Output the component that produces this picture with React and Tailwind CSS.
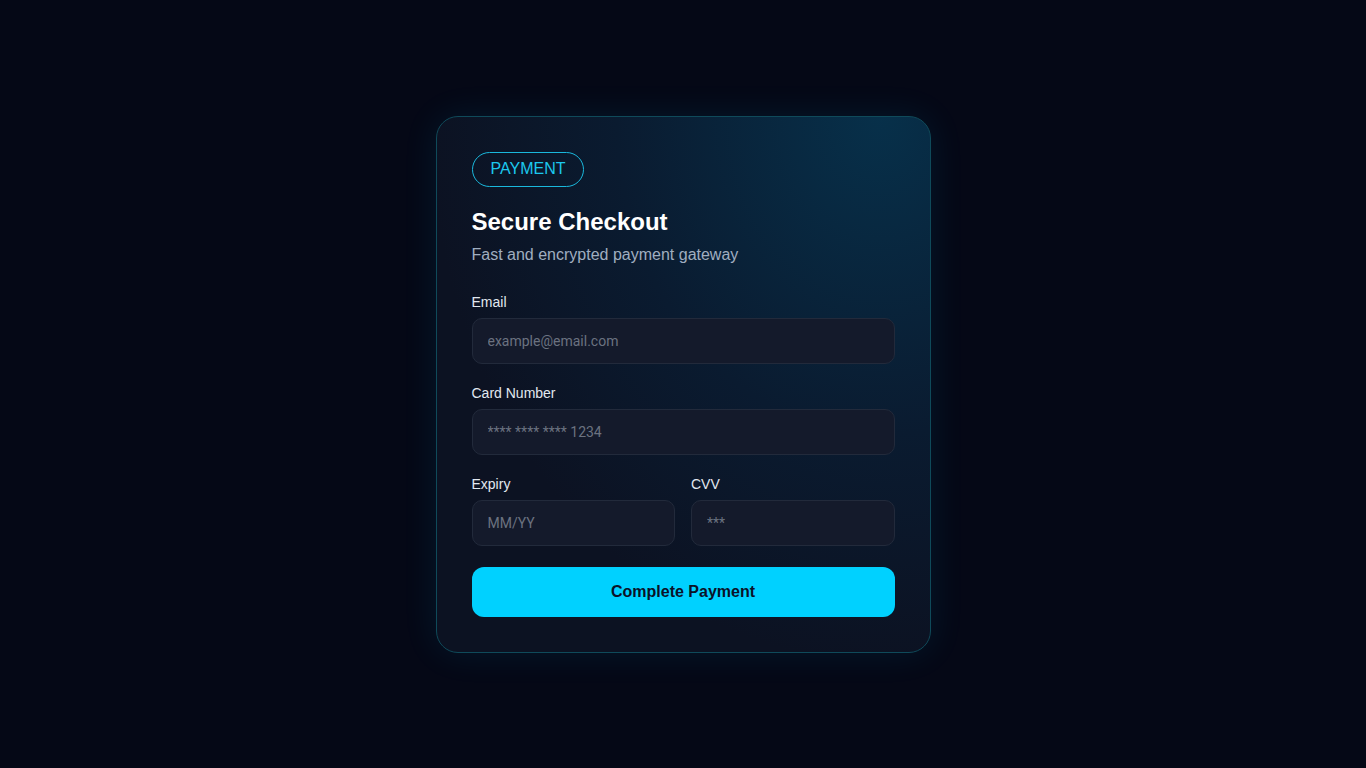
import React from "react";

function Field({ label, placeholder, className = "" }) {
  return (
    <label className={`flex flex-col ${className}`}>
      <span className="text-[14px] leading-5 text-[#e2e8f0] mb-[6px]">{label}</span>
      <input
        type="text"
        placeholder={placeholder}
        className="h-[46px] w-full rounded-[10px] border border-[#222a3b] bg-[#141a2b] px-[15px] text-[14px] text-[#e2e8f0] placeholder:text-[#6b7280] outline-none font-['Roboto',sans-serif]"
      />
    </label>
  );
}

export default function App() {
  return (
    <div className="min-h-screen w-full bg-[#050816] flex items-center justify-center font-['Liberation_Sans',Arial,sans-serif]">
      <div className="w-[495px] rounded-[22px] border border-[#0f4a5a] bg-[radial-gradient(ellipse_at_90%_0%,#07304a_0%,#0a1b30_42%,#0c1222_72%)] px-[35px] pt-[35px] pb-[35px] shadow-[0_0_36px_rgba(0,200,255,0.09)]">
        <span className="inline-flex h-[35px] items-center rounded-full border border-[#1ab8dc] px-[18px] text-[16px] text-[#1cc8ee]">
          PAYMENT
        </span>
        <h1 className="mt-[19px] text-[24px] leading-8 font-bold text-white">Secure Checkout</h1>
        <p className="mt-[5px] text-[16px] leading-6 text-[#a0aec0]">Fast and encrypted payment gateway</p>

        <div className="mt-[25px] flex flex-col gap-[19px]">
          <Field label="Email" placeholder="example@email.com" />
          <Field label="Card Number" placeholder="**** **** **** 1234" />
          <div className="grid grid-cols-2 gap-4">
            <Field label="Expiry" placeholder="MM/YY" />
            <Field label="CVV" placeholder="***" />
          </div>
        </div>

        <button className="mt-[21px] h-[50px] w-full rounded-[12px] bg-[#00d1ff] text-[16px] font-bold text-[#0b1228]">
          Complete Payment
        </button>
      </div>
    </div>
  );
}
